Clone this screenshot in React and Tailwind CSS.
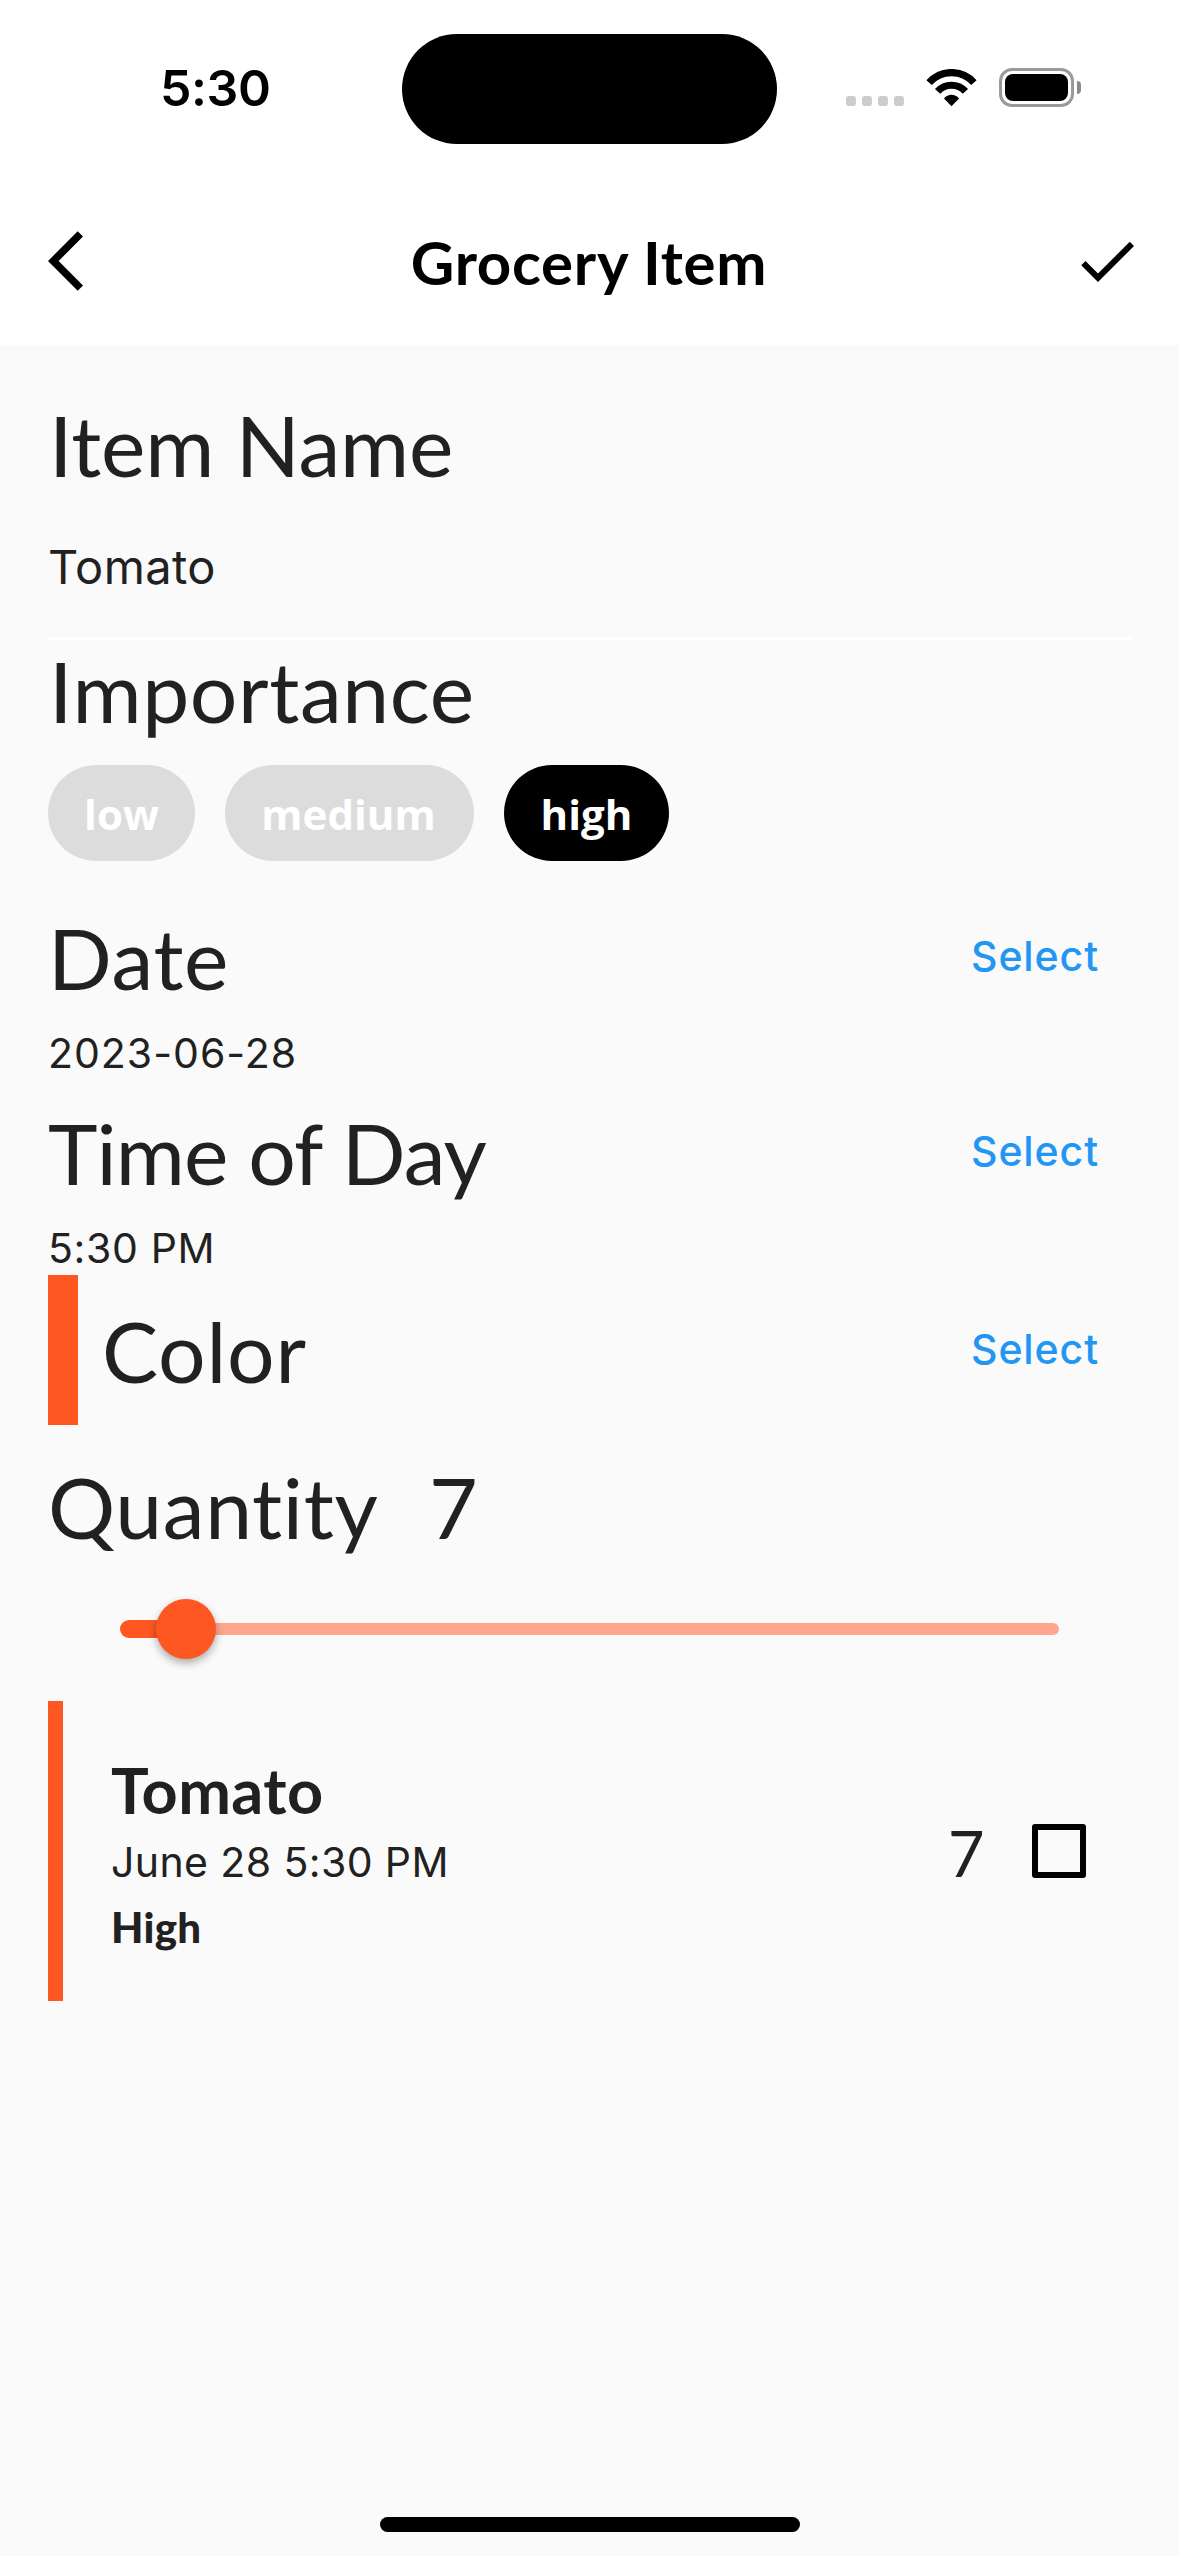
import React from "react";

const ACCENT_BG = "bg-[#ff5722]";

function Wifi() {
  return (
    <svg className="h-[38px] w-[51px]" viewBox="0 0 51 38" fill="none" stroke="#000" strokeWidth="7.2">
      <path d="M3.1 13.6A30 30 0 0 1 47.9 13.6" />
      <path d="M11.6 22.4A18.8 18.8 0 0 1 39.4 22.4" />
      <path d="M25.5 37.3L18 29.4C22 24.6 29 24.6 33 29.4Z" fill="#000" stroke="none" />
    </svg>
  );
}

function Battery() {
  return (
    <div className="flex items-center gap-[3px]">
      <div className="h-[39px] w-[75px] rounded-[13px] border-[3px] border-[#9a9a9a] p-[3px]">
        <div className="h-full w-full rounded-[8px] bg-black" />
      </div>
      <div className="h-[13px] w-[4px] rounded-r-full bg-[#8a8a8a]" />
    </div>
  );
}

function StatusBar() {
  return (
    <div className="flex h-[177px] items-start">
      <div className="mt-[58px] ml-[160px] w-[242px] font-[Inter,sans-serif] text-[50px] leading-[60px] font-semibold tracking-[-0.4px] text-black">
        5:30
      </div>
      <div className="mt-[34px] h-[110px] w-[375px] rounded-full bg-black" />
      <div className="mt-[96px] ml-[69px] flex gap-[6px]">
        {[0, 1, 2, 3].map((n) => (
          <div key={n} className="h-[10px] w-[10px] rounded-[3px] bg-[#cccccc]" />
        ))}
      </div>
      <div className="mt-[69px] ml-[22px]">
        <Wifi />
      </div>
      <div className="mt-[68px] ml-[22px]">
        <Battery />
      </div>
    </div>
  );
}

function NavBar() {
  return (
    <div className="flex h-[168px] items-center justify-between pr-[36px] pl-[48px]">
      <svg className="h-[72px] w-[72px]" viewBox="0 0 24 24" fill="#000">
        <path d="M11.67 3.87L9.9 2.1 0 12l9.9 9.9 1.77-1.77L3.54 12z" />
      </svg>
      <h1 className="pt-[2px] pr-[13px] text-[60px] leading-[72px] font-bold tracking-[0.7px] text-black">
        Grocery Item
      </h1>
      <svg className="h-[72px] w-[72px]" viewBox="0 0 24 24" fill="#000">
        <path d="M9 16.17L4.83 12l-1.42 1.41L9 19 21 7l-1.41-1.41z" />
      </svg>
    </div>
  );
}

function SelectButton() {
  return (
    <button className="w-[160px] text-left font-[Inter,sans-serif] text-[41px] leading-[50px] font-medium tracking-[0.9px] text-[#2196f3]">
      Select
    </button>
  );
}

function Heading({ children, className = "tracking-[0.4px]" }) {
  return <h2 className={`text-[84px] leading-[101px] whitespace-nowrap ${className}`}>{children}</h2>;
}

function Picker({ title, value }) {
  return (
    <div className="flex items-start justify-between">
      <div>
        {title}
        {value}
      </div>
      <div className="mt-6">
        <SelectButton />
      </div>
    </div>
  );
}

function Slider() {
  return (
    <div className="flex h-[144px] items-center px-[72px]">
      <div className={`h-[18px] w-[66px] rounded-l-full ${ACCENT_BG}`} />
      <div className={`z-10 mx-[-30px] h-[60px] w-[60px] rounded-full shadow-[0_4px_8px_rgba(0,0,0,0.32)] ${ACCENT_BG}`} />
      <div className="h-[12px] flex-1 rounded-r-full bg-[#ffa78e]" />
    </div>
  );
}

function ItemCard() {
  return (
    <div className="flex h-[300px]">
      <div className={`w-[15px] ${ACCENT_BG}`} />
      <div className="ml-[48px] flex-1 pt-[51px]">
        <div className="text-[63px] leading-[76px] font-bold tracking-[0.4px]">Tomato</div>
        <div className="mt-[9px] font-[Inter,sans-serif] text-[41px] leading-[50px] tracking-[0.4px]">
          June 28 5:30 PM
        </div>
        <div className="mt-[15px] text-[42px] leading-[50px] font-black tracking-[0.3px]">High</div>
      </div>
      <div className="mt-[114px] w-[84px] text-[63px] leading-[76px]">7</div>
      <div className="mt-[123px] mr-[45px] h-[54px] w-[54px] rounded-[3px] border-[6px] border-black" />
    </div>
  );
}

export default function App() {
  return (
    <div className="flex h-[2556px] w-[1179px] flex-col bg-[#fafafa] font-[Lato,sans-serif] text-[#212121]">
      <header className="bg-white">
        <StatusBar />
        <NavBar />
      </header>
      <main className="flex-1 px-[48px] pt-[49px]">
        <div className="pl-[1px]">
          <Heading className="tracking-[-0.1px]">Item Name</Heading>
        </div>
        <div className="h-[145px] border-b-[3px] border-white pt-[42px] font-[Inter,sans-serif] text-[47px] leading-[60px] tracking-[0.4px]">
          Tomato
        </div>
        <div className="pl-[1px]">
          <Heading className="tracking-[0.6px]">Importance</Heading>
        </div>
        <div className="mt-6 flex gap-[30px] font-['Open_Sans',sans-serif] text-[42px] font-bold text-white">
          <div className="flex h-[96px] w-[147px] items-center justify-center rounded-full bg-[#dcdcdc]">low</div>
          <div className="flex h-[96px] w-[249px] items-center justify-center rounded-full bg-[#dcdcdc] pr-[2px]">medium</div>
          <div className="flex h-[96px] w-[165px] items-center justify-center rounded-full bg-black">high</div>
        </div>
        <div className="mt-[46px] flex flex-col gap-6">
          <Picker
            title={<Heading className="tracking-[0.7px]">Date</Heading>}
            value={
              <div className="mt-5 font-[Inter,sans-serif] text-[41px] leading-[50px] tracking-[1px]">2023-06-28</div>
            }
          />
          <Picker
            title={<Heading className="tracking-[-0.85px]">Time of Day</Heading>}
            value={
              <div className="mt-5 font-[Inter,sans-serif] text-[41px] leading-[50px] tracking-[0.64px]">5:30 PM</div>
            }
          />
        </div>
        <div className="mt-[2px] flex h-[150px] items-center">
          <div className={`h-full w-[30px] ${ACCENT_BG}`} />
          <div className="flex-1 pl-6">
            <Heading className="tracking-[0.79px]">Color</Heading>
          </div>
          <div className="pb-[2px]">
            <SelectButton />
          </div>
        </div>
        <div className="mt-[31px] flex">
          <div className="w-[381px]">
            <Heading className="tracking-[0.65px]">Quantity</Heading>
          </div>
          <Heading>7</Heading>
        </div>
        <Slider />
        <ItemCard />
      </main>
      <footer className="flex justify-center pb-6">
        <div className="h-[15px] w-[420px] rounded-full bg-black" />
      </footer>
    </div>
  );
}
